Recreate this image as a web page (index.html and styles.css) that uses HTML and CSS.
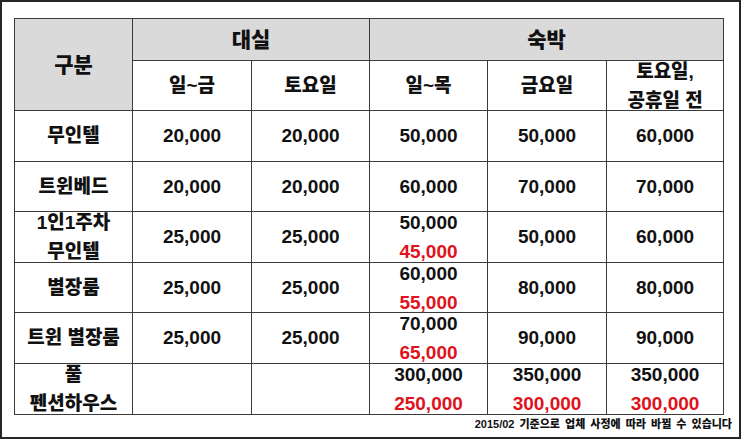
FILE: index.html
```html
<!DOCTYPE html>
<html lang="ko">
<head>
<meta charset="utf-8">
<title>요금표</title>
<link rel="stylesheet" href="styles.css">
</head>
<body>
<div class="frame">
  <table class="price">
    <colgroup>
      <col class="c1"><col class="c2"><col class="c3"><col class="c4"><col class="c5"><col class="c6">
    </colgroup>
    <thead>
      <tr class="h1">
        <th rowspan="2" class="gray big">구분</th>
        <th colspan="2" class="gray big">대실</th>
        <th colspan="3" class="gray big">숙박</th>
      </tr>
      <tr class="h2">
        <th>일~금</th>
        <th>토요일</th>
        <th>일~목</th>
        <th>금요일</th>
        <th><div class="stack">토요일,<br>공휴일 전</div></th>
      </tr>
    </thead>
    <tbody>
      <tr class="ra">
        <th>무인텔</th>
        <td>20,000</td><td>20,000</td><td>50,000</td><td>50,000</td><td>60,000</td>
      </tr>
      <tr class="rb">
        <th>트윈베드</th>
        <td>20,000</td><td>20,000</td><td>60,000</td><td>70,000</td><td>70,000</td>
      </tr>
      <tr class="ra">
        <th><div class="stack">1인1주차<br>무인텔</div></th>
        <td>25,000</td><td>25,000</td>
        <td><div class="stack">50,000<br><span class="red">45,000</span></div></td>
        <td>50,000</td><td>60,000</td>
      </tr>
      <tr class="rb">
        <th>별장룸</th>
        <td>25,000</td><td>25,000</td>
        <td><div class="stack">60,000<br><span class="red">55,000</span></div></td>
        <td>80,000</td><td>80,000</td>
      </tr>
      <tr class="ra">
        <th>트윈 별장룸</th>
        <td>25,000</td><td>25,000</td>
        <td><div class="stack">70,000<br><span class="red">65,000</span></div></td>
        <td>90,000</td><td>90,000</td>
      </tr>
      <tr class="ra">
        <th><div class="stack">풀<br>펜션하우스</div></th>
        <td></td><td></td>
        <td><div class="stack">300,000<br><span class="red">250,000</span></div></td>
        <td><div class="stack">350,000<br><span class="red">300,000</span></div></td>
        <td><div class="stack">350,000<br><span class="red">300,000</span></div></td>
      </tr>
    </tbody>
  </table>
  <p class="note">2015/02 기준으로 업체 사정에 따라 바뀔 수 있습니다</p>
</div>
</body>
</html>
```

FILE: styles.css
```css
html, body {
  margin: 0;
  padding: 0;
  background: #ffffff;
}

.frame {
  box-sizing: border-box;
  width: 741px;
  height: 439px;
  border: 2px solid #262626;
  padding: 16px 7px 0 12px;
  font-family: "Liberation Sans", "Noto Sans CJK KR", sans-serif;
  font-weight: 900;
  color: #111111;
}

.price {
  border-collapse: collapse;
  table-layout: fixed;
  width: 709px;
}

.c1 { width: 118px; }
.c2 { width: 119px; }
.c3 { width: 118px; }
.c4 { width: 118px; }
.c5 { width: 119px; }
.c6 { width: 117px; }

.price th,
.price td {
  border: 1px solid #3a3a3a;
  padding: 0;
  text-align: center;
  vertical-align: middle;
  font-size: 19px;
  font-weight: 900;
  line-height: 22px;
  white-space: nowrap;
}

.price th {
  font-size: 19px;
}

.price .big {
  font-size: 21px;
}

.gray {
  background: #dadada;
}

.h1 { height: 42px; }
.h2 { height: 50px; }
.ra { height: 51px; }
.rb { height: 50px; }

.stack {
  line-height: 29px;
  margin: -6px 0;
}

.red {
  color: #e0121b;
}

.note {
  margin: 1px 0 0 0;
  text-align: right;
  font-size: 11px;
  line-height: 16px;
  word-spacing: 2px;
  color: #111111;
}
```
